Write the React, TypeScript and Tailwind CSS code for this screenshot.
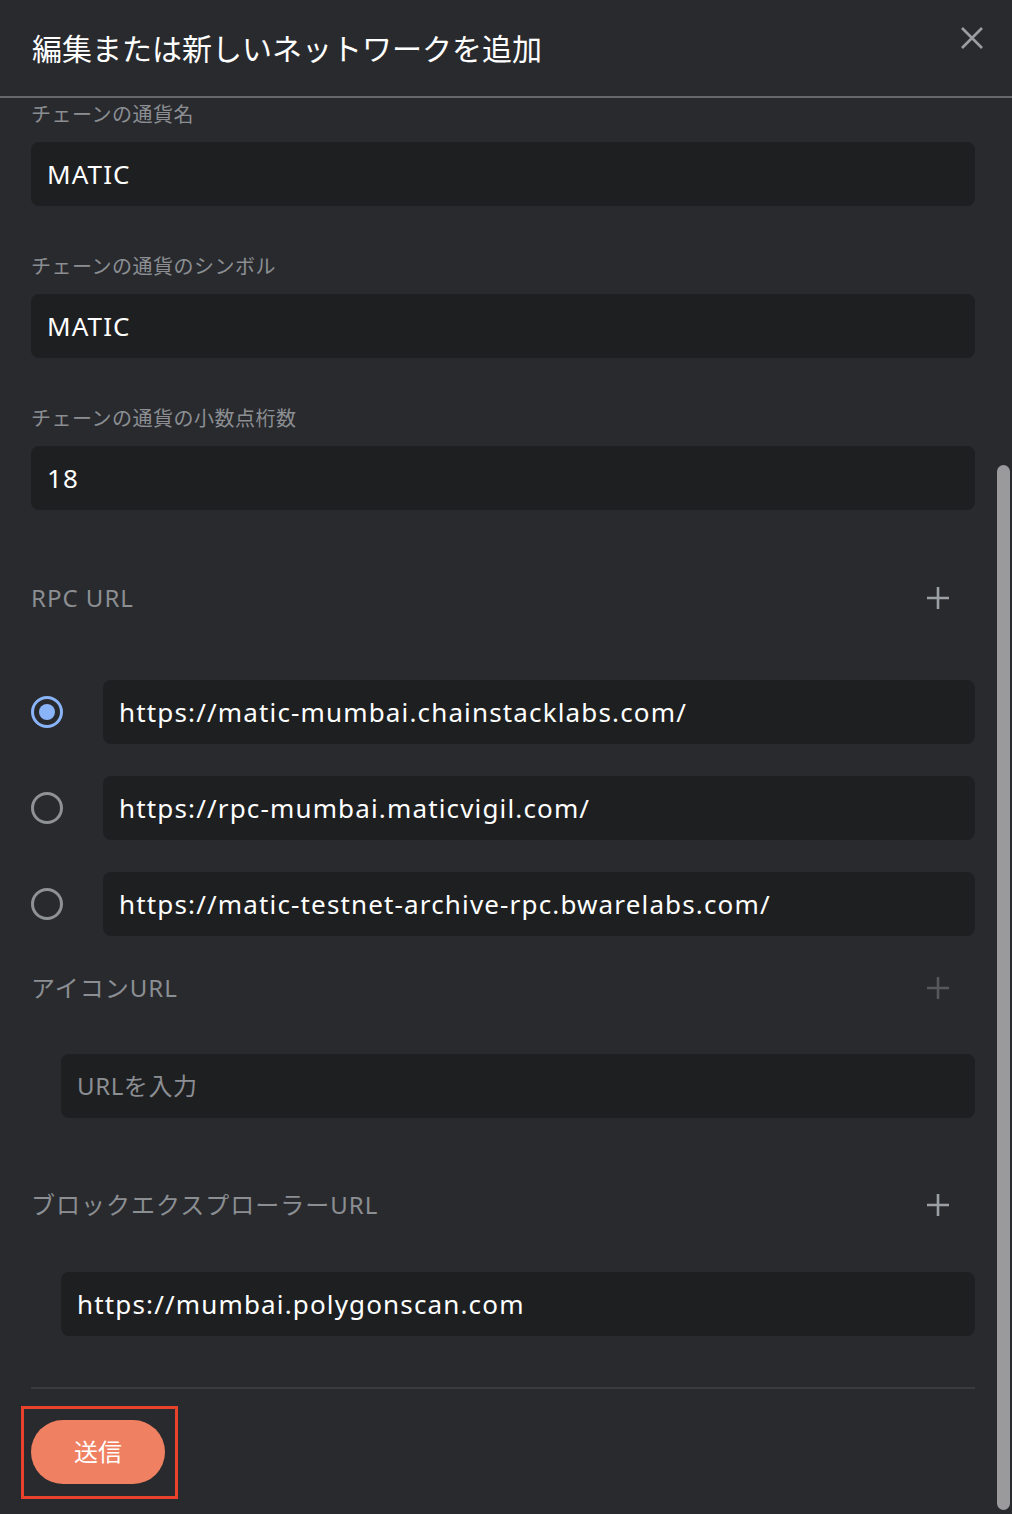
import React from "react";

const sans = "font-['Noto_Sans','Noto_Sans_CJK_JP',sans-serif]";

function PlusIcon({ dim = false }: { dim?: boolean }) {
	return (
		<svg
			width="26"
			height="26"
			viewBox="0 0 26 26"
			className={dim ? "text-[#55585c]" : "text-[#9aa0a4]"}
		>
			<path d="M13 2v22M2 13h22" stroke="currentColor" strokeWidth="2.6" />
		</svg>
	);
}

function Field({
	label,
	value,
}: {
	label: string;
	value: string;
}) {
	return (
		<div className="flex flex-col">
			<div className="text-[20px] leading-[24px] tracking-[0.5px] text-[#8b8e92]">{label}</div>
			<div className="mt-[15px] h-16 rounded-lg bg-[#1e1f21] px-4 flex items-center text-[26px] tracking-[1.1px] text-white">
				{value}
			</div>
		</div>
	);
}

function Radio({ checked }: { checked: boolean }) {
	return checked ? (
		<div className="w-8 h-8 rounded-full border-[3px] border-[#8ab4f8] flex items-center justify-center shrink-0">
			<div className="w-4 h-4 rounded-full bg-[#8ab4f8]" />
		</div>
	) : (
		<div className="w-8 h-8 rounded-full border-[3px] border-[#8e9296] shrink-0" />
	);
}

function RpcRow({ url, checked }: { url: string; checked: boolean }) {
	return (
		<div className="flex items-center">
			<div className="w-[72px] shrink-0">
				<Radio checked={checked} />
			</div>
			<div className="flex-1 h-16 rounded-lg bg-[#1e1f21] px-4 flex items-center text-[26px] tracking-[1.15px] text-white">
				{url}
			</div>
		</div>
	);
}

function SectionHead({ title, dim = false }: { title: string; dim?: boolean }) {
	return (
		<div className="flex items-center justify-between pr-6">
			<span className="text-[24px] leading-[32px] tracking-[1px] text-[#8b8e92]">{title}</span>
			<PlusIcon dim={dim} />
		</div>
	);
}

export default function App() {
	return (
		<div className={`relative w-[1012px] h-[1514px] overflow-hidden bg-[#292a2e] ${sans}`}>
			<div className="h-[98px] border-b-2 border-[#65676a] flex items-center justify-between pl-8 pr-7">
				<h1 className="text-[30px] text-white">編集または新しいネットワークを追加</h1>
				<svg width="24" height="24" viewBox="0 0 24 24" className="text-[#9a9ea2] -mt-[20px]">
					<path d="M2 2l20 20M22 2L2 22" stroke="currentColor" strokeWidth="2.6" />
				</svg>
			</div>

			<div className="pl-[31px] pr-[37px] pt-[5px] flex flex-col">
				<div className="flex flex-col gap-[49px]">
					<Field label="チェーンの通貨名" value="MATIC" />
					<Field label="チェーンの通貨のシンボル" value="MATIC" />
					<Field label="チェーンの通貨の小数点桁数" value="18" />
				</div>

				<div className="mt-[72px]">
					<SectionHead title="RPC URL" />
				</div>
				<div className="mt-[66px] flex flex-col gap-8">
					<RpcRow checked url="https://matic-mumbai.chainstacklabs.com/" />
					<RpcRow checked={false} url="https://rpc-mumbai.maticvigil.com/" />
					<RpcRow checked={false} url="https://matic-testnet-archive-rpc.bwarelabs.com/" />
				</div>

				<div className="mt-9">
					<SectionHead title="アイコンURL" dim />
				</div>
				<div className="mt-[50px] ml-[30px] h-16 rounded-lg bg-[#1e1f21] px-4 flex items-center text-[24px] tracking-[0.6px] text-[#8b8e92]">
					URLを入力
				</div>

				<div className="mt-[71px]">
					<SectionHead title="ブロックエクスプローラーURL" />
				</div>
				<div className="mt-[51px] ml-[30px] h-16 rounded-lg bg-[#1e1f21] px-4 flex items-center text-[26px] tracking-[1.15px] text-white">
					https://mumbai.polygonscan.com
				</div>

				<div className="mt-[51px] h-[2px] bg-[#3a3b3f]" />

				<div className="mt-[17px] -ml-[10px] self-start border-[3px] border-[#e8432a] pt-[11px] pb-[12px] pl-[7px] pr-[10px]">
					<button className="h-16 w-[134px] rounded-full bg-[#ef8062] text-white text-[24px]">
						送信
					</button>
				</div>
			</div>

			<div className="absolute left-[997px] top-[465px] w-[13px] h-[1045px] rounded-full bg-[#9a9a9c]" />
		</div>
	);
}
